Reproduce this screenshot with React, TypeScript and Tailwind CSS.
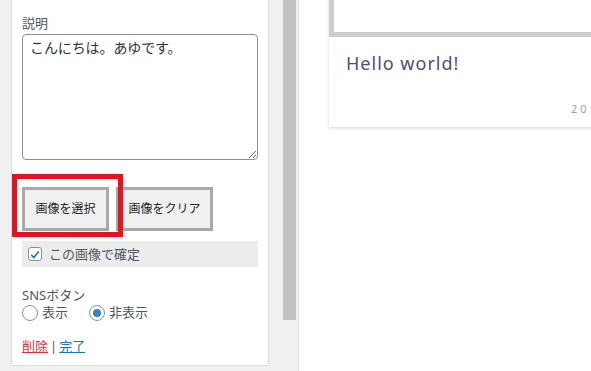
import React from "react";

export default function App() {
  return (
    <div className="relative flex h-[371px] w-[591px] overflow-hidden bg-white font-['Noto_Sans','Noto_Sans_CJK_JP',sans-serif]">
      {/* Left settings column */}
      <div className="flex w-[299px] shrink-0 border-r border-[#dcdcde] bg-[#f0f0f1]">
        <div className="ml-[11px] h-[366px] w-[258px] shrink-0 border-x border-b border-[#dcdcde] bg-white px-[10px] pt-[15px]">
          <div className="text-[13px] leading-[16px] text-[#50575e]">説明</div>
          <textarea
            className="mt-[3px] block h-[126px] w-full resize-y rounded-[4px] border border-[#8c8f94] px-[7px] py-[3px] text-[14px] leading-[19px] tracking-[-0.1px] text-[#2c3338] outline-none"
            defaultValue="こんにちは。あゆです。"
          />
          <div className="mt-[27px] flex gap-[7px]">
            <button className="h-[44px] w-[87px] border-[3px] border-[#a8a8a8] bg-[#f0f0f0] text-[12px] text-[#1d2327]">
              画像を選択
            </button>
            <button className="h-[44px] w-[97px] border-[3px] border-[#a8a8a8] bg-[#f0f0f0] text-[12px] text-[#1d2327]">
              画像をクリア
            </button>
          </div>
          <div className="mt-[10px] flex h-[26px] items-center gap-[7px] bg-[#ececec] pl-[6px]">
            <span className="flex h-[14px] w-[14px] items-center justify-center rounded-[3px] border border-[#8c8f94] bg-white">
              <svg viewBox="0 0 16 16" className="h-[13px] w-[13px]">
                <path d="M3 8.5 L6.5 12 L13 4" fill="none" stroke="#2271b1" strokeWidth="2.2" />
              </svg>
            </span>
            <span className="text-[13px] leading-[16px] text-[#50575e]">この画像で確定</span>
          </div>
          <div className="mt-[20px] text-[13px] leading-[16px] text-[#50575e]">SNSボタン</div>
          <div className="mt-[1px] flex h-[18px] items-center text-[13px] text-[#50575e]">
            <span className="h-[16px] w-[16px] rounded-full border border-[#8c8f94] bg-white" />
            <span className="ml-[4px]">表示</span>
            <span className="ml-[21px] flex h-[16px] w-[16px] items-center justify-center rounded-full border border-[#8c8f94] bg-white">
              <span className="h-[8px] w-[8px] rounded-full bg-[#3582c4]" />
            </span>
            <span className="ml-[4px]">非表示</span>
          </div>
          <div className="mt-[16px] text-[13px] leading-[16px] text-[#50575e]">
            <a className="text-[#d63638] underline">削除</a>
            <span className="mx-[2px]">|</span>
            <a className="text-[#2271b1] underline">完了</a>
          </div>
        </div>
        <div className="ml-[14px] h-[320px] w-[13px] shrink-0 bg-[#c1c1c1]" />
      </div>

      {/* Right preview */}
      <div className="flex-1 overflow-hidden pl-[30px]">
        <div className="-mt-[30px] w-[400px] bg-white shadow-[0_1px_3px_rgba(0,0,0,0.16)]">
          <div className="h-[67px] border-b-[5px] border-l-[5px] border-[#cccccc] bg-white" />
          <div className="h-[90px] pl-[17px] pt-[14px]">
            <div className="text-[18px] leading-[24px] tracking-[1px] text-[#4a5078]">Hello world!</div>
            <div className="ml-[225px] mt-[27px] whitespace-nowrap text-[11px] leading-[14px] tracking-[3px] text-[#a0a0a0]">
              2019.01.01
            </div>
          </div>
        </div>
      </div>

      {/* Red annotation box */}
      <div className="absolute left-[12px] top-[174px] h-[63px] w-[111px] border-[5px] border-[#e3141f]" />
    </div>
  );
}
